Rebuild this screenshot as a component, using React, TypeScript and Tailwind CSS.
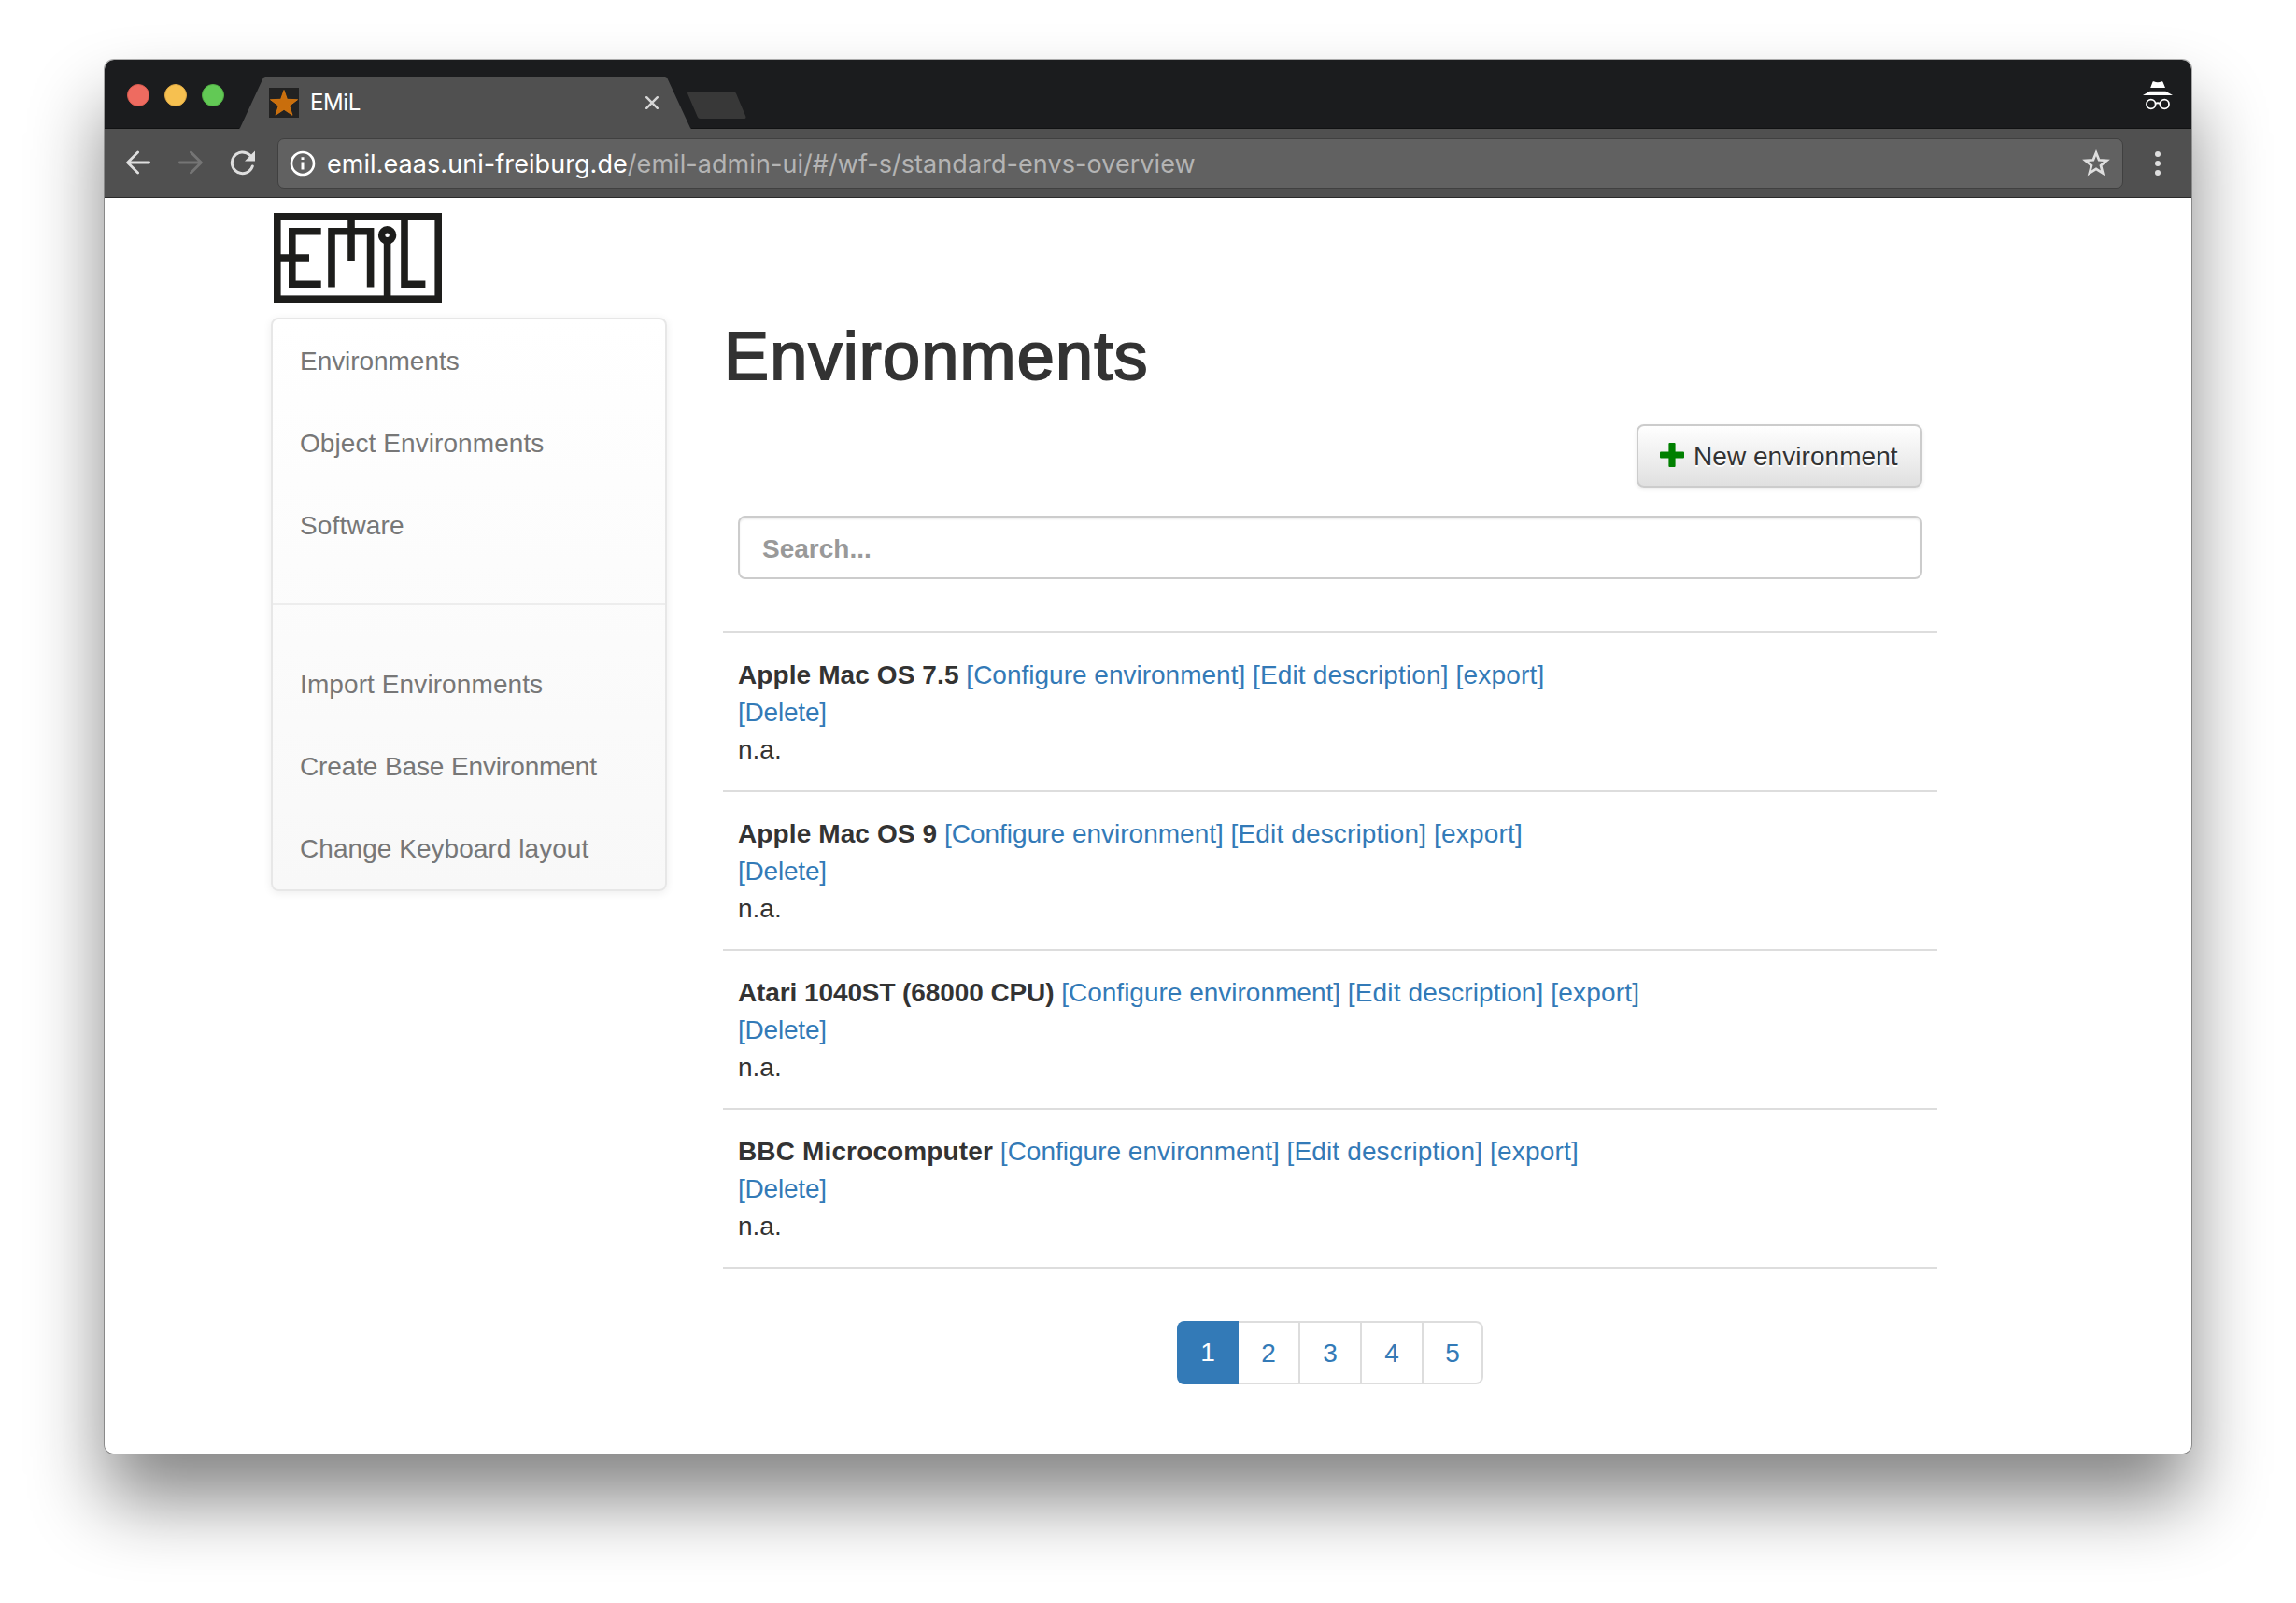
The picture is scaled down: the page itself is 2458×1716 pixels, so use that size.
import React from "react";

type Label = { text: string; tracking: string };

const primaryNav: Label[] = [
  { text: "Environments", tracking: "tracking-[-0.05px]" },
  { text: "Object Environments", tracking: "tracking-[0.08px]" },
  { text: "Software", tracking: "tracking-[0.15px]" },
];
const secondaryNav: Label[] = [
  { text: "Import Environments", tracking: "tracking-[0.1px]" },
  { text: "Create Base Environment", tracking: "tracking-[-0.12px]" },
  { text: "Change Keyboard layout", tracking: "tracking-[0.05px]" },
];
const environments: Label[] = [
  { text: "Apple Mac OS 7.5", tracking: "tracking-[0.1px]" },
  { text: "Apple Mac OS 9", tracking: "tracking-[0.11px]" },
  { text: "Atari 1040ST (68000 CPU)", tracking: "tracking-[-0.1px]" },
  { text: "BBC Microcomputer", tracking: "tracking-[0.14px]" },
];
const pages = ["2", "3", "4", "5"];

function Logo() {
  return (
    <svg width="180" height="96" viewBox="0 0 180 96" fill="none" stroke="#1d1d1b" strokeWidth="7.6" className="block">
      <rect x="3.8" y="3.8" width="172.4" height="88.4" />
      <path d="M50.7 19.8H19.8V76.3H50.7M7 48H38" />
      <path d="M62 79.5V19.8H103.6V79.5M83 6V51" />
      <path d="M121.6 30V90" />
      <circle cx="121.6" cy="23.8" r="6" strokeWidth="7.4" />
      <path d="M140 6V76.3H162.4" />
    </svg>
  );
}

function TitleBar() {
  return (
    <div className="flex h-[74px] border-b border-[#111213] bg-[#1b1c1e]">
      <div className="flex w-[144px] items-center gap-4 pt-[3px] pl-6">
        <div className="size-6 shrink-0 rounded-full border border-[#d85a4e] bg-[#ee6b60]" />
        <div className="size-6 shrink-0 rounded-full border border-[#dfa944] bg-[#f6c050]" />
        <div className="size-6 shrink-0 rounded-full border border-[#52b045] bg-[#62c955]" />
      </div>
      <div className="mt-[18px] -mb-px flex h-[56px] w-[484px] items-center bg-[#505050] pl-8 [clip-path:polygon(0_100%,1px_55px,26px_1px,28px_0,456px_0,458px_1px,483px_55px,484px_100%)]">
        <svg width="32" height="32" viewBox="0 0 32 32" className="block">
          <rect width="32" height="32" fill="#222" />
          <path
            d="M16 2.5L19.4 12.3L30.6 12.7L21.8 19.3L25 29.3L16 23.3L7 29.3L10.2 19.3L1.4 12.7L12.6 12.3Z"
            fill="#c96e0c"
            stroke="#e07c10"
            strokeWidth="0.8"
          />
        </svg>
        <span className="ml-3 w-[359px] text-[24px] leading-8 tracking-[-0.4px] text-white">EMiL</span>
        <svg width="14" height="14" viewBox="0 0 14 14" className="block" stroke="#d6d6d6" strokeWidth="2.4" strokeLinecap="round">
          <path d="M1.2 1.2L12.8 12.8M12.8 1.2L1.2 12.8" />
        </svg>
      </div>
      <svg width="64" height="30" viewBox="0 0 64 30" className="-ml-[5.5px] mt-[34px] block">
        <path d="M2.5 0H50Q52 0 53 2L63.3 26.5Q64 29 62 29H14.5Q12.5 29 11.7 27L1.2 2.5Q0.6 0 2.5 0Z" fill="#383838" />
      </svg>
      <svg width="32" height="31" viewBox="0 0 32 31" className="mt-[23px] mr-5 ml-auto block" fill="#fff">
        <path d="M10.6 0.4Q11 0 11.8 0.3Q16 2 20.2 0.3Q21.2 0 21.5 0.7L24 7H8.2Z" />
        <path d="M7.5 10.8H24.5L32 15H0Z" />
        <g fill="none" stroke="#fff" strokeWidth="1.8">
          <circle cx="8.8" cy="24.5" r="4.8" />
          <circle cx="23.2" cy="24.5" r="4.8" />
          <path d="M13.4 23.9Q16 22.6 18.6 23.9" />
        </g>
      </svg>
    </div>
  );
}

function Toolbar() {
  return (
    <div className="flex h-[74px] items-center border-b border-[#2a2a2a] bg-[#505050] pl-[23px]">
      <svg width="26" height="26" viewBox="0 0 26 26" className="mt-[-1px] block" fill="none" stroke="#dedede" strokeWidth="2.8" strokeLinecap="round" strokeLinejoin="round">
        <path d="M24.6 13H2M12.6 2L1.6 13L12.6 24" />
      </svg>
      <svg width="26" height="26" viewBox="0 0 26 26" className="mt-[-1px] ml-[30px] block" fill="none" stroke="#757575" strokeWidth="2.8" strokeLinecap="round" strokeLinejoin="round">
        <path d="M1.4 13H24M13.4 2L24.4 13L13.4 24" />
      </svg>
      <svg width="28" height="27" viewBox="0 0 28 27" className="ml-[29px] block" fill="none" stroke="#dedede" strokeWidth="3">
        <path d="M21.5 5.2A11.3 11.3 0 1 0 24.3 17" strokeLinecap="round" />
        <path d="M27 0.5V11.5H16Z" fill="#dedede" stroke="none" />
      </svg>
      <div className="ml-[23px] flex h-[54px] w-[1976px] items-center rounded-[7px] border border-[#404040] bg-[#616161] pl-3">
        <svg width="28" height="28" viewBox="0 0 28 28" className="block" fill="none" stroke="#fff">
          <circle cx="14" cy="14" r="12" strokeWidth="2.6" />
          <path d="M14 12.4V20.4M14 7.2V10" strokeWidth="3" />
        </svg>
        <span className="ml-3 w-[1879px] pt-[2px] text-[27px] leading-9 tracking-[0.06px] whitespace-nowrap text-[#b4b4b4]">
          <span className="text-white">emil.eaas.uni-freiburg.de</span>/emil-admin-ui/#/wf-s/standard-envs-overview
        </span>
        <svg width="30" height="29" viewBox="0 0 30 29" className="block" fill="none" stroke="#dedede" strokeWidth="2.7">
          <path d="M15 3.6L18.1 11.3L26.4 11.8L20 17.2L22.1 25.3L15 20.8L7.9 25.3L10 17.2L3.6 11.8L11.9 11.3Z" />
        </svg>
      </div>
      <svg width="6" height="26" viewBox="0 0 6 26" className="ml-[34px] block" fill="#dedede">
        <circle cx="3" cy="3" r="3" />
        <circle cx="3" cy="13" r="3" />
        <circle cx="3" cy="23" r="3" />
      </svg>
    </div>
  );
}

function NavItem({ label }: { label: Label }) {
  return (
    <li className="flex h-[88px] items-center pt-[2px] pl-[29px] text-[#777]">
      <a className={label.tracking}>{label.text}</a>
    </li>
  );
}

function Sidebar() {
  return (
    <nav className="h-[614px] w-[424px] rounded-lg border-2 border-[#e7e7e7] bg-linear-to-b from-white to-[#f8f8f8] shadow-[0_2px_10px_rgba(0,0,0,0.075)]">
      <ul>
        {primaryNav.map((label) => (
          <NavItem key={label.text} label={label} />
        ))}
        <li className="my-10 h-[2px] bg-[#ededed]" />
        {secondaryNav.map((label) => (
          <NavItem key={label.text} label={label} />
        ))}
      </ul>
    </nav>
  );
}

function EnvironmentRow({ name }: { name: Label }) {
  return (
    <li className="h-[170px] border-b-2 border-[#ddd] px-4 pt-[25px] leading-10 text-[#333]">
      <b className={name.tracking}>{name.text}</b>{" "}
      <span className="text-[#337ab7]">
        <a>[Configure environment]</a> <a className="tracking-[0.15px]">[Edit description]</a>{" "}
        <a className="tracking-[0.2px]">[export]</a>
        <br />
        <a className="tracking-[-0.2px]">[Delete]</a>
      </span>
      <br />
      n.a.
    </li>
  );
}

function Pagination() {
  return (
    <div className="mx-auto mt-14 flex h-[68px] w-[328px] text-[#337ab7]">
      <span className="flex w-[66px] items-center justify-center rounded-l-lg bg-[#337ab7] text-white">1</span>
      {pages.map((page) => (
        <span
          key={page}
          className="flex w-[66px] items-center justify-center border-y-2 border-r-2 border-[#ddd] pt-px last:w-[64px] last:rounded-r-lg"
        >
          {page}
        </span>
      ))}
    </div>
  );
}

export default function App() {
  return (
    <div className="h-[1716px] w-[2458px] overflow-hidden bg-white pt-16 pl-28">
      <div className="h-[1492px] w-[2234px] rounded-[10px] shadow-[0_0_0_1px_rgba(0,0,0,0.3),0_50px_80px_rgba(0,0,0,0.48)]">
        <div className="h-full overflow-hidden rounded-[10px] bg-white font-['Inter',sans-serif]">
          <TitleBar />
          <Toolbar />
          <div className="flex pt-4 pl-[178px] font-['Liberation_Sans',Arial,sans-serif] text-[28px] leading-10">
            <div>
              <div className="mb-4 pl-[3px]">
                <Logo />
              </div>
              <Sidebar />
            </div>
            <main className="mt-[113px] ml-[60px] w-[1300px]">
              <h1 className="pl-px text-[72px] leading-[80px] tracking-[1.2px] text-[#333] [-webkit-text-stroke:2px_#333]">Environments</h1>
              <div className="mt-[33px] flex justify-end px-4">
                <button className="flex h-[68px] w-[306px] items-center rounded-lg border-2 border-[#ccc] bg-linear-to-b from-white to-[#e0e0e0] pl-[23px] text-[#333] shadow-[0_2px_4px_rgba(0,0,0,0.075),inset_0_2px_0_rgba(255,255,255,0.15)] [text-shadow:0_2px_0_#fff]">
                  <svg width="26" height="28" viewBox="0 0 26 28" className="mr-[10px] block" fill="green">
                    <path d="M10.4 0H15.6Q16.6 0 16.6 1V9.4H25Q26 9.4 26 10.4V15.6Q26 16.6 25 16.6H16.6V25Q16.6 26 15.6 26H10.4Q9.4 26 9.4 25V16.6H1Q0 16.6 0 15.6V10.4Q0 9.4 1 9.4H9.4V1Q9.4 0 10.4 0Z" />
                  </svg>
                  <span className="pt-[2px] tracking-[0.05px]">New environment</span>
                </button>
              </div>
              <div className="mx-4 mt-[30px] flex h-[68px] items-center rounded-lg border-2 border-[#ccc] pt-[3px] pl-6 font-bold text-[#999] shadow-[inset_0_2px_2px_rgba(0,0,0,0.075)]">
                Search...
              </div>
              <ul className="mt-14 border-t-2 border-[#ddd]">
                {environments.map((name) => (
                  <EnvironmentRow key={name.text} name={name} />
                ))}
              </ul>
              <Pagination />
            </main>
          </div>
        </div>
      </div>
    </div>
  );
}
